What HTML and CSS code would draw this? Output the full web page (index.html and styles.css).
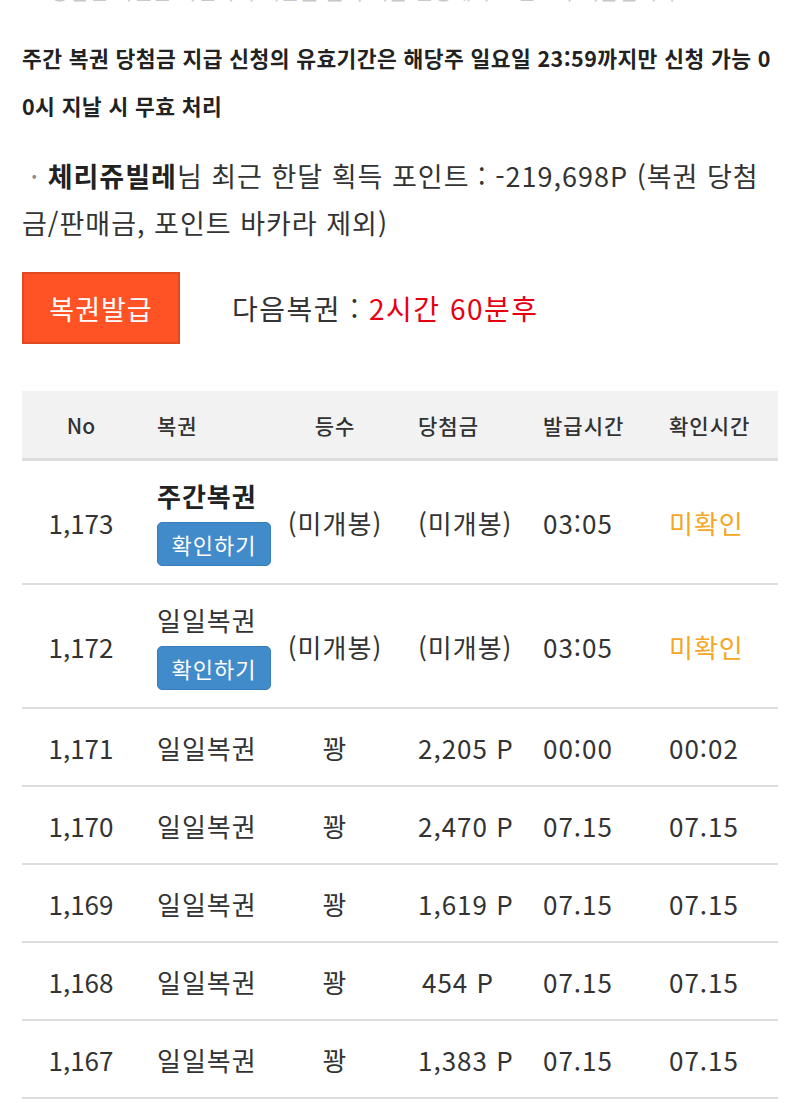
FILE: index.html
```html
<!DOCTYPE html>
<html lang="ko">
<head>
<meta charset="utf-8">
<link rel="stylesheet" href="styles.css">
</head>
<body>
<div class="page">
  <p class="cut">당첨된 복권은 확인하기 버튼을 눌러 지급 신청해야 포인트가 지급됩니다</p>
  <p class="notice">주간 복권 당첨금 지급 신청의 유효기간은 해당주 일요일 23:59까지만 신청 가능 00시 지날 시 무효 처리</p>
  <p class="points">&nbsp;<span class="dot">·</span> <b>체리쥬빌레</b>님 최근 한달 획득 포인트 : -219,698P (복권 당첨금/판매금, 포인트 바카라 제외)</p>
  <div class="issue">
    <button class="issue-btn">복권발급</button>
    <span class="next">다음복권 : <span class="red">2시간 60분후</span></span>
  </div>
  <div class="table">
    <div class="row head">
      <div class="c1">No</div><div class="c2">복권</div><div class="c3">등수</div><div class="c4">당첨금</div><div class="c5">발급시간</div><div class="c6">확인시간</div>
    </div>
    <div class="row tall">
      <div class="c1">1,173</div>
      <div class="c2 stack"><span class="weekly">주간복권</span><button class="check">확인하기</button></div>
      <div class="c3">(미개봉)</div><div class="c4">(미개봉)</div><div class="c5">03:05</div><div class="c6 orange">미확인</div>
    </div>
    <div class="row tall">
      <div class="c1">1,172</div>
      <div class="c2 stack"><span>일일복권</span><button class="check">확인하기</button></div>
      <div class="c3">(미개봉)</div><div class="c4">(미개봉)</div><div class="c5">03:05</div><div class="c6 orange">미확인</div>
    </div>
    <div class="row">
      <div class="c1">1,171</div><div class="c2">일일복권</div><div class="c3">꽝</div><div class="c4">2,205 P</div><div class="c5">00:00</div><div class="c6">00:02</div>
    </div>
    <div class="row">
      <div class="c1">1,170</div><div class="c2">일일복권</div><div class="c3">꽝</div><div class="c4">2,470 P</div><div class="c5">07.15</div><div class="c6">07.15</div>
    </div>
    <div class="row">
      <div class="c1">1,169</div><div class="c2">일일복권</div><div class="c3">꽝</div><div class="c4">1,619 P</div><div class="c5">07.15</div><div class="c6">07.15</div>
    </div>
    <div class="row">
      <div class="c1">1,168</div><div class="c2">일일복권</div><div class="c3">꽝</div><div class="c4 small">454 P</div><div class="c5">07.15</div><div class="c6">07.15</div>
    </div>
    <div class="row">
      <div class="c1">1,167</div><div class="c2">일일복권</div><div class="c3">꽝</div><div class="c4">1,383 P</div><div class="c5">07.15</div><div class="c6">07.15</div>
    </div>
  </div>
</div>
</body>
</html>
```
FILE: styles.css
```css
html, body {
  margin: 0;
  padding: 0;
  background: #fff;
}
body {
  font-family: "Noto Sans CJK KR", "Noto Sans", sans-serif;
  color: #333;
  overflow: hidden;
}
.page {
  padding: 0 22px;
}
.cut {
  margin: -22px 0 0 28px;
  font-size: 21px;
  line-height: 24px;
  color: #c8c8c8;
  white-space: nowrap;
  overflow: hidden;
}
.notice {
  margin: 32px 7px 0 0;
  font-size: 21.5px;
  letter-spacing: 0.4px;
  font-weight: bold;
  line-height: 48px;
  color: #222;
  word-break: break-all;
}
.points {
  margin: 22px 7px 0 0;
  font-size: 27px;
  letter-spacing: 1px;
  line-height: 47px;
  color: #333;
  word-break: break-all;
}
.points .dot {
  color: #888;
}
.points b {
  color: #222;
}
.issue {
  display: flex;
  align-items: center;
  margin-top: 26px;
}
.issue-btn {
  width: 158px;
  height: 72px;
  background: #ff5225;
  border: 2px solid #e04a22;
  color: #fff;
  font-family: inherit;
  font-size: 27px;
  letter-spacing: 1px;
  padding: 0;
}
.next {
  margin-left: 52px;
  font-size: 28px;
  letter-spacing: 1.5px;
  color: #333;
}
.red {
  color: #e60012;
}
.table {
  margin-top: 47px;
  width: 756px;
}
.row {
  display: grid;
  grid-template-columns: 118px 140px 110px 140px 125px 123px;
  align-items: center;
  height: 76px;
  border-bottom: 2px solid #ddd;
  font-size: 26px;
  letter-spacing: 1px;
}
.row.head {
  height: 67px;
  background: #f2f2f2;
  border-bottom: 3px solid #ddd;
  font-size: 21px;
  font-weight: 500;
}
.row.tall {
  height: 122px;
}
.c1, .c3 {
  text-align: center;
}
.c1 {
  letter-spacing: 0;
}
.c2 {
  padding-left: 17px;
}
.c4 {
  padding-left: 28px;
}
.c4.small {
  padding-left: 32px;
}
.c5 {
  padding-left: 13px;
}
.c6 {
  padding-left: 14px;
}
.stack {
  display: flex;
  flex-direction: column;
  align-items: flex-start;
}
.stack span {
  line-height: 34px;
}
.weekly {
  font-weight: bold;
  color: #222;
}
.check {
  margin-top: 9px;
  width: 114px;
  height: 44px;
  background: #428bca;
  border: 1px solid #357ebd;
  border-radius: 5px;
  color: #fff;
  font-family: inherit;
  font-size: 22px;
  letter-spacing: 1px;
  padding: 0;
}
.orange {
  color: #f5a623;
}
```
